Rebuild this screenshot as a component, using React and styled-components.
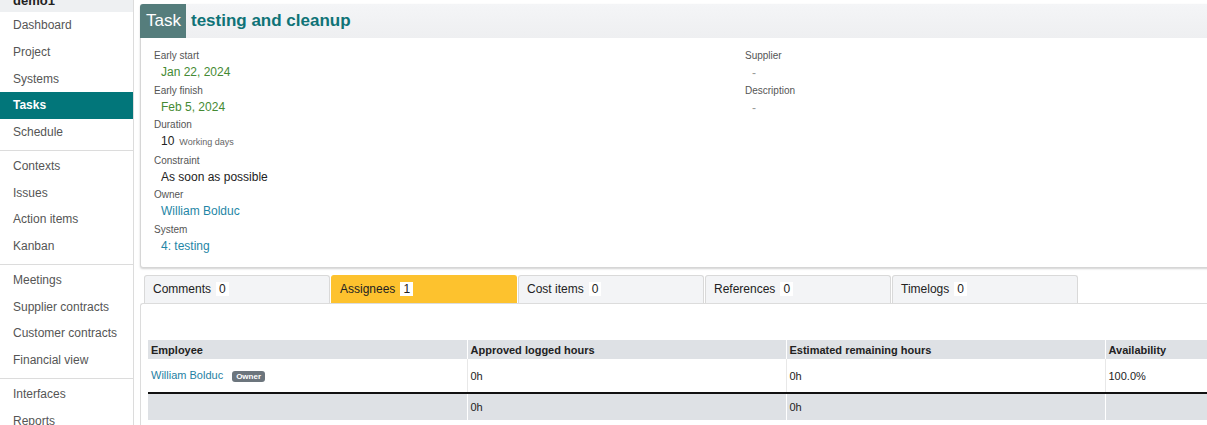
import React from "react";
import styled, { createGlobalStyle } from "styled-components";

const GlobalStyle = createGlobalStyle`
  html, body {
    margin: 0;
    padding: 0;
    overflow: hidden;
    background: #ffffff;
  }
  body {
    font-family: "Liberation Sans", Arial, sans-serif;
    color: #222;
  }
`;

const Layout = styled.div`
  display: flex;
  width: 1440px;
  min-height: 425px;
`;

const Sidebar = styled.nav`
  flex: 0 0 133px;
  border-right: 1px solid #dcdcdc;
  background: #fff;
`;

const SideHeader = styled.div`
  height: 12px;
  overflow: hidden;
  background: #eef0f2;
  span {
    display: block;
    margin-top: -7px;
    padding-left: 13px;
    font-size: 13px;
    font-weight: bold;
    line-height: 15px;
    color: #222;
  }
`;

const NavGroup = styled.div`
  & + & {
    margin-top: 4px;
    border-top: 1px solid #dcdcdc;
    padding-top: 2px;
  }
`;

const NavItem = styled.div`
  height: 26.75px;
  line-height: 26.75px;
  padding-left: 13px;
  font-size: 12px;
  white-space: nowrap;
  color: ${(p) => (p.$active ? "#fff" : "#555")};
  background: ${(p) => (p.$active ? "#02767a" : "transparent")};
  font-weight: ${(p) => (p.$active ? "bold" : "normal")};
`;

const Main = styled.main`
  flex: 1;
  padding: 4px 0 0 6px;
  display: flex;
  flex-direction: column;
`;

const Panel = styled.section`
  border: 1px solid #d6d6d6;
  border-radius: 3px;
  box-shadow: 0 1px 2px rgba(0, 0, 0, 0.18);
  background: #fff;
`;

const PanelHeader = styled.header`
  display: flex;
  align-items: stretch;
  height: 34px;
  background: linear-gradient(#f4f5f7, #eeeff1);
  margin: -1px 0 0 -1px;
`;

const TypeBadge = styled.div`
  display: flex;
  align-items: center;
  padding: 0 5px 0 6px;
  background: #557d7c;
  color: #fff;
  font-size: 17px;
  border-radius: 3px 0 0 0;
`;

const Title = styled.h1`
  margin: 0 0 0 5px;
  display: flex;
  align-items: center;
  font-size: 17px;
  font-weight: bold;
  color: #0f7377;
`;

const Fields = styled.div`
  display: grid;
  grid-template-columns: 591px 1fr;
  padding: 11px 13px 10px;
`;

const FieldColumn = styled.div`
  display: flex;
  flex-direction: column;
`;

const Field = styled.div`
  display: flex;
  flex-direction: column;
`;

const Label = styled.div`
  font-size: 10px;
  line-height: 14px;
  color: #555;
`;

const Value = styled.div`
  padding-left: 7px;
  font-size: 12px;
  line-height: ${(p) => (p.$tone === "empty" ? "20px" : "18px")};
  padding-bottom: ${(p) => (p.$tall ? "2.5px" : p.$tone === "empty" ? "1px" : "2.5px")};
  color: ${(p) =>
    p.$tone === "date"
      ? "#458a33"
      : p.$tone === "link"
      ? "#1f86a6"
      : p.$tone === "empty"
      ? "#999"
      : "#222"};
`;

const Unit = styled.span`
  font-size: 9px;
  color: #666;
  margin-left: 5px;
`;

const Tabs = styled.div`
  display: flex;
  gap: 1px;
  margin: 7px 0 0 4px;
`;

const Tab = styled.div`
  box-sizing: border-box;
  width: 186px;
  height: 28px;
  display: flex;
  align-items: center;
  padding: 0 0 1px 8px;
  font-size: 12px;
  color: #222;
  border: 1px solid ${(p) => (p.$active ? "#fdc22e" : "#d9d9d9")};
  border-bottom: none;
  border-radius: 3px 3px 0 0;
  background: ${(p) => (p.$active ? "#fdc22e" : "#f3f4f6")};
`;

const Count = styled.span`
  margin-left: 5px;
  padding: 0 3px;
  background: #fff;
  line-height: 14px;
`;

const TabBody = styled.section`
  border: 1px solid #dcdcdc;
  border-radius: 3px;
  border-right: none;
  background: #fff;
  padding: 36px 0 10px 7px;
  flex: 1;
`;

const Table = styled.table`
  border-collapse: collapse;
  table-layout: fixed;
  width: 1276px;
  font-size: 11px;
`;

const HeadCell = styled.th`
  height: 19px;
  padding: 0 3px;
  text-align: left;
  font-weight: bold;
  background: #dee1e5;
  color: #222;
  border-left: 1px solid #fff;
  &:first-child {
    border-left: none;
  }
`;

const Cell = styled.td`
  height: 33px;
  padding: 0 3px;
  border-left: 1px solid #e8e8e8;
  border-bottom: 2px solid #111;
  &:first-child {
    border-left: none;
  }
`;

const FootCell = styled.td`
  height: 26px;
  padding: 0 3px;
  background: #dee1e5;
  border-left: 1px solid #fff;
  &:first-child {
    border-left: none;
  }
`;

const PersonLink = styled.span`
  color: #1f7fa3;
`;

const RoleBadge = styled.span`
  display: inline-block;
  margin-left: 9px;
  padding: 1px 4px;
  border-radius: 3px;
  background: #6c757d;
  color: #fff;
  font-size: 8px;
  font-weight: bold;
  line-height: 9px;
`;

const navGroups = [
  ["Dashboard", "Project", "Systems", "Tasks", "Schedule"],
  ["Contexts", "Issues", "Action items", "Kanban"],
  ["Meetings", "Supplier contracts", "Customer contracts", "Financial view"],
  ["Interfaces", "Reports"],
];

const tabs = [
  { name: "Comments", count: 0 },
  { name: "Assignees", count: 1, active: true },
  { name: "Cost items", count: 0 },
  { name: "References", count: 0 },
  { name: "Timelogs", count: 0 },
];

export default function App() {
  return (
    <>
      <GlobalStyle />
      <Layout>
        <Sidebar>
          <SideHeader>
            <span>demo1</span>
          </SideHeader>
          {navGroups.map((group, i) => (
            <NavGroup key={i}>
              {group.map((item) => (
                <NavItem key={item} $active={item === "Tasks"}>
                  {item}
                </NavItem>
              ))}
            </NavGroup>
          ))}
        </Sidebar>
        <Main>
          <Panel>
            <PanelHeader>
              <TypeBadge>Task</TypeBadge>
              <Title>testing and cleanup</Title>
            </PanelHeader>
            <Fields>
              <FieldColumn>
                <Field>
                  <Label>Early start</Label>
                  <Value $tone="date">Jan 22, 2024</Value>
                </Field>
                <Field>
                  <Label>Early finish</Label>
                  <Value $tone="date">Feb 5, 2024</Value>
                </Field>
                <Field>
                  <Label>Duration</Label>
                  <Value $tall>
                    10<Unit>Working days</Unit>
                  </Value>
                </Field>
                <Field>
                  <Label>Constraint</Label>
                  <Value>As soon as possible</Value>
                </Field>
                <Field>
                  <Label>Owner</Label>
                  <Value $tone="link">William Bolduc</Value>
                </Field>
                <Field>
                  <Label>System</Label>
                  <Value $tone="link">4: testing</Value>
                </Field>
              </FieldColumn>
              <FieldColumn>
                <Field>
                  <Label>Supplier</Label>
                  <Value $tone="empty">-</Value>
                </Field>
                <Field>
                  <Label>Description</Label>
                  <Value $tone="empty">-</Value>
                </Field>
              </FieldColumn>
            </Fields>
          </Panel>
          <Tabs>
            {tabs.map((t) => (
              <Tab key={t.name} $active={t.active}>
                {t.name}
                <Count>{t.count}</Count>
              </Tab>
            ))}
          </Tabs>
          <TabBody>
            <Table>
              <thead>
                <tr>
                  <HeadCell>Employee</HeadCell>
                  <HeadCell>Approved logged hours</HeadCell>
                  <HeadCell>Estimated remaining hours</HeadCell>
                  <HeadCell>Availability</HeadCell>
                </tr>
              </thead>
              <tbody>
                <tr>
                  <Cell>
                    <PersonLink>William Bolduc</PersonLink>
                    <RoleBadge>Owner</RoleBadge>
                  </Cell>
                  <Cell>0h</Cell>
                  <Cell>0h</Cell>
                  <Cell>100.0%</Cell>
                </tr>
              </tbody>
              <tfoot>
                <tr>
                  <FootCell />
                  <FootCell>0h</FootCell>
                  <FootCell>0h</FootCell>
                  <FootCell />
                </tr>
              </tfoot>
            </Table>
          </TabBody>
        </Main>
      </Layout>
    </>
  );
}
